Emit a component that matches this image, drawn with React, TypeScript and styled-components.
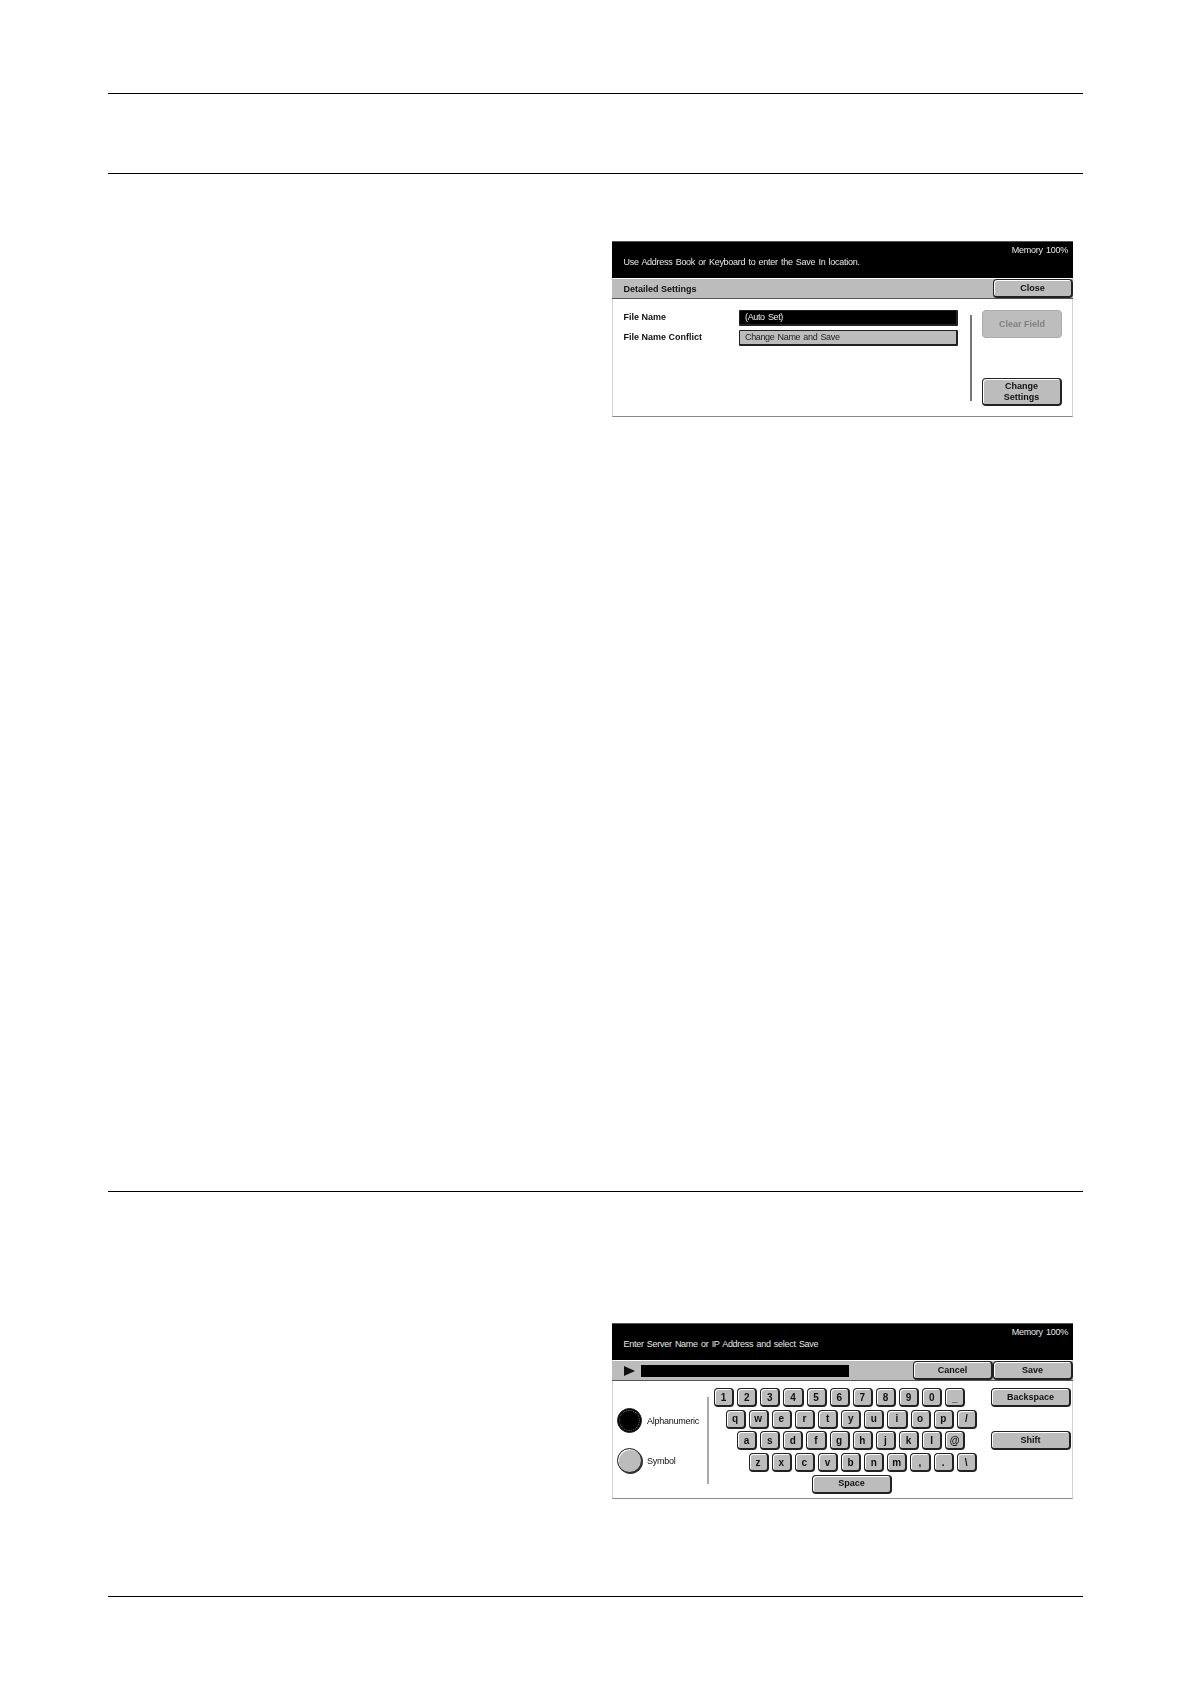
import React from "react";
import styled, { createGlobalStyle, css } from "styled-components";

const GlobalStyle = createGlobalStyle`
  html, body {
    margin: 0;
    padding: 0;
    background: #fff;
  }
  body {
    font-family: "Liberation Sans", Arial, sans-serif;
  }
`;

const keyRows = [
  { indent: 0, keys: ["1", "2", "3", "4", "5", "6", "7", "8", "9", "0", "_"] },
  { indent: 11.5, keys: ["q", "w", "e", "r", "t", "y", "u", "i", "o", "p", "/"] },
  { indent: 23, keys: ["a", "s", "d", "f", "g", "h", "j", "k", "l", "@"] },
  { indent: 34.5, keys: ["z", "x", "c", "v", "b", "n", "m", ",", ".", "\\"] },
];

const App = () => (
  <Page>
    <GlobalStyle />
    <TopRule />
    <SecondRule />
    <SettingsPanel>
      <Header>
        <Message>Use Address Book or Keyboard to enter the Save In location.</Message>
        <Memory>Memory 100%</Memory>
      </Header>
      <Bar>
        <BarTitle>Detailed Settings</BarTitle>
        <BarButton>Close</BarButton>
      </Bar>
      <SettingsBody>
        <Fields>
          <FieldLabel>File Name</FieldLabel>
          <Field $active>(Auto Set)</Field>
          <FieldLabel>File Name Conflict</FieldLabel>
          <Field>Change Name and Save</Field>
        </Fields>
        <SettingsDivider />
        <SideButtons>
          <SideButton disabled>Clear Field</SideButton>
          <SideButton>
            Change
            <br />
            Settings
          </SideButton>
        </SideButtons>
      </SettingsBody>
    </SettingsPanel>

    <ThirdRule />
    <KeyboardPanel>
      <Header>
        <Message>Enter Server Name or IP Address and select Save</Message>
        <Memory>Memory 100%</Memory>
      </Header>
      <Bar>
        <Arrow viewBox="0 0 11 10">
          <polygon points="0,0 11,5 0,10" />
        </Arrow>
        <InputBox />
        <BarButtons>
          <BarButton>Cancel</BarButton>
          <BarButton>Save</BarButton>
        </BarButtons>
      </Bar>
      <KeyboardBody>
        <Modes>
          <Mode>
            <Radio $selected />
            <ModeLabel>Alphanumeric</ModeLabel>
          </Mode>
          <Mode>
            <Radio />
            <ModeLabel>Symbol</ModeLabel>
          </Mode>
        </Modes>
        <KeyboardDivider />
        <Keyboard>
          {keyRows.map((row) => (
            <KeyRow key={row.keys[0]} $indent={row.indent}>
              {row.keys.map((k) => (
                <Key key={k}>{k}</Key>
              ))}
            </KeyRow>
          ))}
          <KeyRow $indent={98}>
            <SpaceKey>Space</SpaceKey>
          </KeyRow>
        </Keyboard>
        <EditKeys>
          <EditKey>Backspace</EditKey>
          <EditKey>Shift</EditKey>
        </EditKeys>
      </KeyboardBody>
    </KeyboardPanel>
    <BottomRule />
  </Page>
);

const Page = styled.div`
  box-sizing: border-box;
  width: 1190px;
  height: 1684px;
  padding: 93px 107px 0 108px;
  overflow: hidden;
`;

const Rule = styled.div`
  height: 1px;
  background: #000;
`;

const TopRule = styled(Rule)``;

const SecondRule = styled(Rule)`
  margin-top: 79px;
`;

const ThirdRule = styled(Rule)`
  margin-top: 774px;
`;

const BottomRule = styled(Rule)`
  margin-top: 97px;
`;

const Panel = styled.div`
  box-sizing: border-box;
  width: 461px;
  margin-left: auto;
  margin-right: 10px;
  border-left: 1px solid #d4d4d4;
  border-right: 1px solid #d4d4d4;
  border-bottom: 1px solid #8a8a8a;
  color: #111;
  filter: blur(0.35px);
`;

const SettingsPanel = styled(Panel)`
  margin-top: 67px;
  height: 176px;
`;

const KeyboardPanel = styled(Panel)`
  margin-top: 131px;
  height: 176px;
`;

const Header = styled.div`
  box-sizing: border-box;
  display: flex;
  justify-content: space-between;
  align-items: flex-start;
  height: 37px;
  margin: 0 -1px;
  padding: 2px 5px 0 11.5px;
  background: #000;
  border-top: 1px solid #555;
  color: #e8e8e8;
  font-size: 9px;
  line-height: 12px;
`;

const Message = styled.span`
  margin-top: 12px;
  letter-spacing: -0.28px;
  word-spacing: 1px;
`;

const Memory = styled.span`
  letter-spacing: -0.25px;
  word-spacing: 1px;
`;

const Bar = styled.div`
  box-sizing: border-box;
  display: flex;
  align-items: center;
  height: 20px;
  margin: 1px -1px 0;
  padding-left: 11.5px;
  background: #bcbcbc;
  border-bottom: 1px solid #555;
`;

const BarTitle = styled.span`
  flex: 1;
  font-size: 9px;
  font-weight: 700;
`;

const bevel = css`
  box-sizing: border-box;
  display: flex;
  align-items: center;
  justify-content: center;
  padding: 0;
  background: #bcbcbc;
  border: 1px solid #222;
  border-right-width: 2px;
  border-bottom-width: 2px;
  border-radius: 4px;
  box-shadow: inset 1px 1px 0 #fff;
  color: #111;
  font-family: "Liberation Sans", Arial, sans-serif;
  font-size: 9px;
  font-weight: 700;
  line-height: 11px;
  text-align: center;
`;

const BarButton = styled.button`
  ${bevel}
  flex: none;
  width: 80px;
  height: 19px;
`;

const BarButtons = styled.div`
  display: flex;
  margin-left: auto;
`;

const SettingsBody = styled.div`
  display: flex;
  align-items: flex-start;
  padding: 11px 0 0 10.5px;
`;

const Fields = styled.div`
  display: grid;
  grid-template-columns: 115.5px 219px;
  row-gap: 4px;
  align-items: center;
`;

const FieldLabel = styled.span`
  margin-top: -2px;
  font-size: 9px;
  font-weight: 700;
`;

const Field = styled.div<{ $active?: boolean }>`
  box-sizing: border-box;
  height: 16px;
  padding-left: 5px;
  background: ${({ $active }) => ($active ? "#000" : "#bcbcbc")};
  border: 1px solid #222;
  border-right-width: 2px;
  border-bottom-width: 2px;
  border-radius: 1px;
  color: ${({ $active }) => ($active ? "#eee" : "#222")};
  font-size: 9px;
  letter-spacing: -0.35px;
  word-spacing: 1px;
  line-height: 13px;
`;

const SettingsDivider = styled.div`
  flex: none;
  width: 2px;
  height: 86px;
  margin: 5px 10px 0 12px;
  background: #777;
`;

const SideButtons = styled.div`
  display: flex;
  flex-direction: column;
  justify-content: space-between;
  height: 96px;
`;

const SideButton = styled.button`
  ${bevel}
  width: 80px;
  height: 28px;

  &:disabled {
    background: #bdbdbd;
    border: 1px solid #aaa;
    box-shadow: none;
    color: #808080;
  }
`;

const Arrow = styled.svg`
  flex: none;
  width: 11px;
  height: 10px;
  margin-right: 6px;
  fill: #111;
`;

const InputBox = styled.div`
  width: 208px;
  height: 12px;
  background: #000;
`;

const KeyboardBody = styled.div`
  display: flex;
  align-items: flex-start;
  padding-left: 4px;
`;

const Modes = styled.div`
  flex: none;
  display: flex;
  flex-direction: column;
  gap: 15px;
  width: 90px;
  margin-top: 27px;
`;

const Mode = styled.div`
  display: flex;
  align-items: center;
  gap: 5px;
`;

const Radio = styled.span<{ $selected?: boolean }>`
  box-sizing: border-box;
  flex: none;
  width: 25px;
  height: 25px;
  border-radius: 50%;
  background: ${({ $selected }) => ($selected ? "#000" : "#bcbcbc")};
  border: 1px solid #222;
  box-shadow: ${({ $selected }) =>
    $selected ? "inset 0 0 0 1px #000" : "inset 1px 1px 0 #fff, 1px 1px 0 #333"};
  outline: ${({ $selected }) => ($selected ? "1px dotted #777" : "none")};
  outline-offset: -3px;
`;

const ModeLabel = styled.span`
  font-size: 9px;
  letter-spacing: -0.25px;
`;

const KeyboardDivider = styled.div`
  flex: none;
  width: 1.5px;
  height: 87px;
  margin: 16px 5.5px 0 0;
  background: #aaa;
`;

const Keyboard = styled.div`
  flex: none;
  display: flex;
  flex-direction: column;
  gap: 2.7px;
  width: 277px;
  margin-top: 7px;
`;

const KeyRow = styled.div<{ $indent: number }>`
  display: flex;
  gap: 3px;
  margin-left: ${({ $indent }) => $indent}px;
`;

const Key = styled.button`
  ${bevel}
  width: 20.13px;
  height: 19px;
  font-size: 10px;
`;

const SpaceKey = styled(Key)`
  width: 80px;
  font-size: 9px;
`;

const EditKeys = styled.div`
  display: flex;
  flex-direction: column;
  gap: 24px;
  margin-top: 7px;
`;

const EditKey = styled.button`
  ${bevel}
  width: 80px;
  height: 19px;
`;

export default App;
